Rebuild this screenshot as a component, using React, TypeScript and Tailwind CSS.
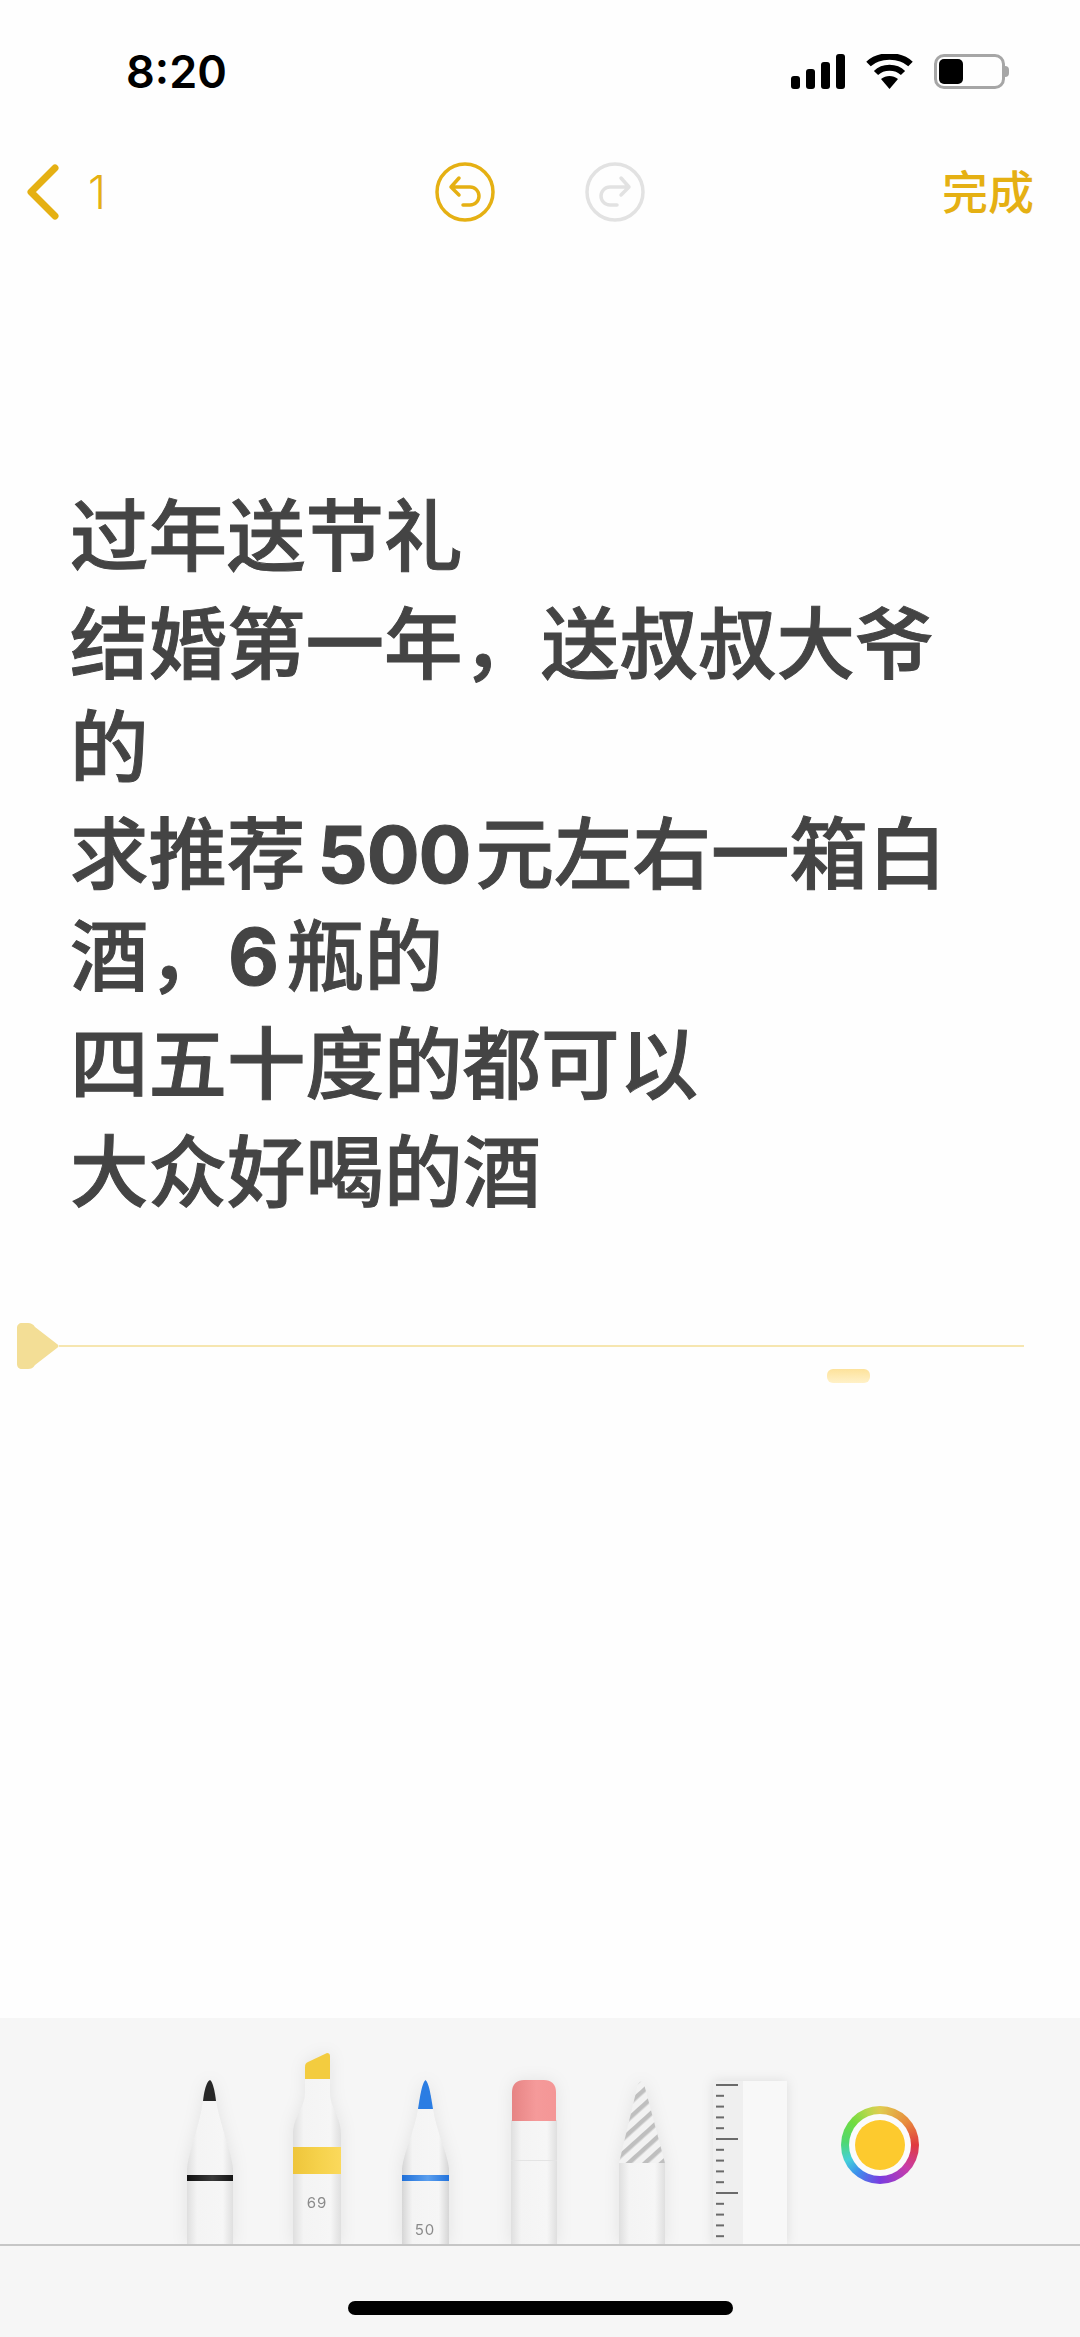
import React from 'react';

const latin = "font-['Inter'] font-bold";

const noteLines = [
  { key: 'a', h: 'h-[108px]', body: <>过年送节礼</> },
  { key: 'b', h: 'h-[103px]', body: <>结婚第一年，送叔叔大爷</> },
  { key: 'c', h: 'h-[107px]', body: <>的</> },
  { key: 'd', h: 'h-[102px]', body: <>求推荐<span className={latin + ' ml-[12px] mr-[5px] tracking-[-1px]'}>500</span>元左右一箱白</> },
  { key: 'e', h: 'h-[108px]', body: <>酒，<span className={latin + ' ml-[1px] mr-[7px]'}>6</span>瓶的</> },
  { key: 'f', h: 'h-[108px]', body: <>四五十度的都可以</> },
  { key: 'g', h: 'h-[108px]', body: <>大众好喝的酒</> },
];

function BodyGradient({ id, edge = '#dfdfdf' }: { id: string; edge?: string }) {
  return (
    <linearGradient id={id} x1="0" x2="1" y1="0" y2="0">
      <stop offset="0" stopColor={edge} />
      <stop offset="0.22" stopColor="#f4f4f4" />
      <stop offset="0.78" stopColor="#f6f6f6" />
      <stop offset="1" stopColor={edge} />
    </linearGradient>
  );
}

function BandGradient({ id, from, mid, to }: { id: string; from: string; mid: string; to: string }) {
  return (
    <linearGradient id={id} x1="0" x2="1" y1="0" y2="0">
      <stop offset="0" stopColor={from} />
      <stop offset="0.55" stopColor={mid} />
      <stop offset="1" stopColor={to} />
    </linearGradient>
  );
}

function Pencil() {
  return (
    <svg width="46" height="164" viewBox="0 0 46 164" className="drop-shadow-[0_0_8px_rgba(0,0,0,0.08)]">
      <defs>
        <BodyGradient id="pencil-body" />
        <BandGradient id="pencil-band" from="#111111" mid="#3a3a3a" to="#151515" />
      </defs>
      <path d="M16 21 L29 21 C33 45 44 70 46 88 V164 H0 V88 C2 70 13 45 16 21Z" fill="url(#pencil-body)" />
      <path d="M16 21 C17 12 19 2 23 0 C26 2 28 12 29 21Z" fill="#272727" />
      <rect x="0" y="95" width="46" height="6" fill="url(#pencil-band)" />
    </svg>
  );
}

function Marker() {
  return (
    <svg width="48" height="191" viewBox="0 0 48 191" className="drop-shadow-[0_0_8px_rgba(0,0,0,0.08)]">
      <defs>
        <BodyGradient id="marker-body" />
        <BandGradient id="marker-band" from="#eec53a" mid="#f6d24c" to="#fbd95c" />
      </defs>
      <path d="M12 26 H37 V40 C37 56 48 62 48 82 V191 H0 V82 C0 62 12 56 12 40Z" fill="url(#marker-body)" />
      <path d="M12 26 V14 C12 11 13 10 15 9 L34 0 C36 0 37 1 37 3 V26Z" fill="#f3cc3f" />
      <rect x="0" y="94" width="48" height="27" fill="url(#marker-band)" />
      <text x="24" y="155" textAnchor="middle" fontSize="15" letterSpacing="1" fill="#8b8b8b" fontFamily="Inter, sans-serif">69</text>
    </svg>
  );
}

function Pen() {
  return (
    <svg width="47" height="164" viewBox="0 0 47 164" className="drop-shadow-[0_0_8px_rgba(0,0,0,0.08)]">
      <defs>
        <BodyGradient id="pen-body" edge="#d6d6d6" />
        <BandGradient id="pen-band" from="#1f6fd8" mid="#5b9fee" to="#2273dc" />
      </defs>
      <path d="M16 29 L31 29 C34 50 45 72 47 88 V164 H0 V88 C2 72 13 50 16 29Z" fill="url(#pen-body)" />
      <path d="M16 29 C18 16 20 3 23.500 0 C27 3 29 16 31 29Z" fill="#2b7de3" />
      <rect x="0" y="95" width="47" height="6" fill="url(#pen-band)" />
      <text x="23" y="155" textAnchor="middle" fontSize="15" letterSpacing="1" fill="#8b8b8b" fontFamily="Inter, sans-serif">50</text>
    </svg>
  );
}

function Eraser() {
  return (
    <svg width="46" height="164" viewBox="0 0 46 164" className="drop-shadow-[0_0_8px_rgba(0,0,0,0.08)]">
      <defs>
        <BodyGradient id="eraser-body" />
        <BandGradient id="eraser-cap" from="#e68484" mid="#f59a9a" to="#f49696" />
      </defs>
      <rect x="0" y="40" width="46" height="124" fill="url(#eraser-body)" />
      <path d="M1 41 V12 C1 4 6 0 13 0 H33 C40 0 45 4 45 12 V41Z" fill="url(#eraser-cap)" />
      <rect x="0" y="80" width="46" height="1" fill="#e4e4e4" />
    </svg>
  );
}

function Lasso() {
  return (
    <svg width="46" height="164" viewBox="0 0 46 164" className="drop-shadow-[0_0_8px_rgba(0,0,0,0.08)]">
      <defs>
        <BodyGradient id="lasso-body" />
        <pattern id="lasso-stripes" width="11" height="11" patternUnits="userSpaceOnUse" patternTransform="rotate(-42)">
          <rect width="11" height="11" fill="#f2f2f2" />
          <rect width="11" height="4.500" fill="#bfbfbf" />
        </pattern>
      </defs>
      <rect x="0" y="83" width="46" height="81" fill="url(#lasso-body)" />
      <path d="M0 83 L19 4 Q22 -1 25 4 L46 83Z" fill="url(#lasso-stripes)" />
    </svg>
  );
}

function Ruler() {
  const ticks = Array.from({ length: 15 }, (_, i) => i);
  return (
    <svg width="74" height="163" viewBox="0 0 74 163" className="drop-shadow-[0_0_6px_rgba(0,0,0,0.1)]">
      <rect width="74" height="163" fill="#f8f8f8" />
      <rect width="30" height="163" fill="#efefef" />
      {ticks.map(i => (
        <rect key={i} x="3" y={3 + i * 10.8} width={i % 5 === 0 ? 22 : 8} height="2" fill="#6a6a6a" />
      ))}
    </svg>
  );
}

function ColorPicker() {
  return (
    <div className="ml-[54px] mb-[60px] w-[78px] h-[78px] rounded-full flex items-center justify-center bg-[conic-gradient(#e0cc50_0deg,#e88a3c_50deg,#e03a40_90deg,#c83ca8_130deg,#7a3ce0_180deg,#3c90ec_220deg,#44d0d8_245deg,#50d870_275deg,#70dc40_310deg,#b8d84c_340deg,#e0cc50_360deg)]">
      <div className="w-[62px] h-[62px] rounded-full bg-[#fbfbfb] flex items-center justify-center">
        <div className="w-[50px] h-[50px] rounded-full bg-[#fdca2e]" />
      </div>
    </div>
  );
}

export default function App() {
  return (
    <div className="w-[1080px] h-[2337px] bg-[#fefefe] flex flex-col overflow-hidden font-['Inter','Noto_Sans_CJK_SC',sans-serif]">
      {/* status bar */}
      <div className="h-[145px] shrink-0 flex items-start pt-[49px] pl-[126px] pr-[71px] justify-between">
        <span className="text-[45px] leading-[46px] font-semibold text-black">8:20</span>
        <div className="flex items-center gap-[21px] pt-[5px]">
          <svg width="54" height="35" viewBox="0 0 54 35">
            <rect x="0" y="22" width="9" height="13" rx="3" fill="#000" />
            <rect x="15" y="15" width="9" height="20" rx="3" fill="#000" />
            <rect x="30" y="8" width="9" height="27" rx="3" fill="#000" />
            <rect x="45" y="0" width="9" height="35" rx="3" fill="#000" />
          </svg>
          <svg width="47" height="35" viewBox="0 0 47 35">
            <path d="M23.500 35 L15 25 C20 21 27 21 32 25Z" fill="#000" />
            <path d="M10 19 C17 12 30 12 37 19" fill="none" stroke="#000" strokeWidth="6" />
            <path d="M2.500 10 C13 0 34 0 44.500 10" fill="none" stroke="#000" strokeWidth="6.500" />
          </svg>
          <div className="flex items-center">
            <div className="w-[71px] h-[35px] rounded-[10px] border-[3px] border-[#a6a6a6] p-[2px] flex">
              <div className="w-[24px] rounded-[5px] bg-black" />
            </div>
            <div className="w-[4px] h-[11px] rounded-r-full bg-[#a6a6a6]" />
          </div>
        </div>
      </div>

      {/* editor nav */}
      <div className="h-[94px] shrink-0 flex items-center pl-[25px] pr-[46px] text-[#e5b013]">
        <svg width="36" height="56" viewBox="0 0 36 56">
          <path d="M30 4 L6 28 L30 52" fill="none" stroke="#e5b013" strokeWidth="7" strokeLinecap="round" strokeLinejoin="round" />
        </svg>
        <span className="ml-[27px] text-[46px] font-light leading-none">1</span>
        <div className="ml-[329px] flex items-center gap-[90px]">
          <svg width="60" height="60" viewBox="0 0 60 60">
            <circle cx="30" cy="30" r="28" fill="none" stroke="#e5b013" strokeWidth="3.500" />
            <path d="M24 16 L16 25 L24 33 M16 25 H35 A9 9 0 0 1 35 43 H28" fill="none" stroke="#e5b013" strokeWidth="3.500" strokeLinecap="round" strokeLinejoin="round" />
          </svg>
          <svg width="60" height="60" viewBox="0 0 60 60">
            <circle cx="30" cy="30" r="28" fill="none" stroke="#e2e2e2" strokeWidth="3.500" />
            <path d="M36 16 L44 25 L36 33 M44 25 H25 A9 9 0 0 0 25 43 H32" fill="none" stroke="#e2e2e2" strokeWidth="3.500" strokeLinecap="round" strokeLinejoin="round" />
          </svg>
        </div>
        <span className="ml-auto text-[46px] font-medium leading-none">完成</span>
      </div>

      {/* note text */}
      <div className="pt-[246px] pl-[70px] text-[78.5px] leading-[104px] font-medium text-[#444444] shrink-0 [-webkit-text-stroke:1px_#444444]">
        {noteLines.map(line => (
          <div key={line.key} className={line.h + ' whitespace-nowrap'}>{line.body}</div>
        ))}
      </div>

      {/* ruler handle and stroke */}
      <div className="mt-[94px] pl-[17px] shrink-0">
        <div className="flex items-center w-[1007px]">
          <svg width="42" height="46" viewBox="0 0 42 46">
            <path d="M0 5 C0 2 2 0 5 0 H11 C14 0 16 1 18 4 L40 21 C42 22 42 24 40 25 L18 42 C16 45 14 46 11 46 H5 C2 46 0 44 0 41Z" fill="#f3de96" />
          </svg>
          <div className="flex-1 h-[2px] bg-[#f6e6b0]" />
        </div>
        <div className="ml-[810px] w-[43px] h-[14px] rounded-[6px] bg-linear-to-b from-[#fde29a] to-[#fff1c8]" />
      </div>

      {/* tool tray */}
      <div className="mt-auto h-[319px] shrink-0 bg-[#f6f6f6] flex flex-col">
        <div className="h-[226px] shrink-0 flex items-end pl-[187px] overflow-hidden">
          <Pencil />
          <div className="ml-[60px]"><Marker /></div>
          <div className="ml-[61px]"><Pen /></div>
          <div className="ml-[62px]"><Eraser /></div>
          <div className="ml-[62px]"><Lasso /></div>
          <div className="ml-[48px]"><Ruler /></div>
          <ColorPicker />
        </div>
        <div className="h-[2px] bg-[#c6c6c6] shrink-0" />
        <div className="flex justify-center pt-[55px]">
          <div className="w-[385px] h-[14px] rounded-full bg-black" />
        </div>
      </div>
    </div>
  );
}
